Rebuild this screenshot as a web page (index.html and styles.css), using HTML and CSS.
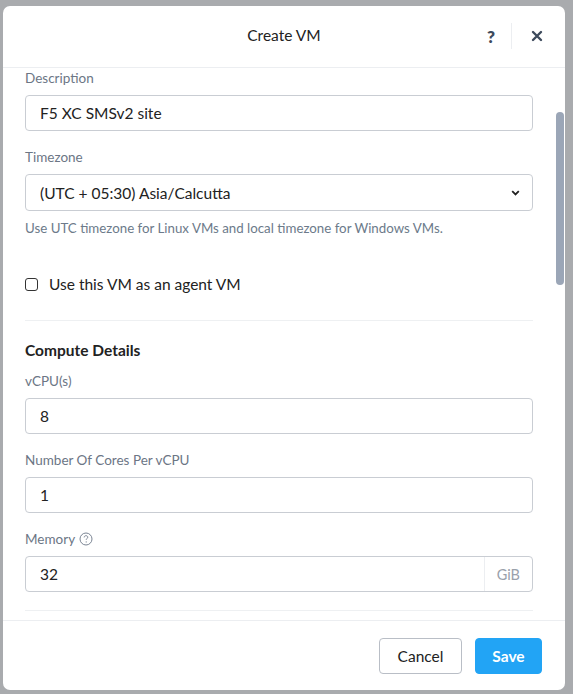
FILE: index.html
```html
<!DOCTYPE html>
<html>
<head>
<meta charset="utf-8">
<link rel="stylesheet" href="styles.css">
</head>
<body>
<div class="backdrop">
  <div class="modal">
    <div class="header">
      <div class="title">Create VM</div>
      <div class="actions">
        <span class="help">?</span>
        <span class="vdiv"></span>
        <svg class="close" width="12" height="12" viewBox="0 0 12 12"><path d="M2 2 L10 10 M10 2 L2 10" stroke="#3d4a5c" stroke-width="2.4" stroke-linecap="round"/></svg>
      </div>
    </div>
    <div class="body">
      <div class="scroll">
        <div class="field">
          <label class="lbl">Description</label>
          <div class="input">F5 XC SMSv2 site</div>
        </div>
        <div class="field">
          <label class="lbl">Timezone</label>
          <div class="input select">
            <span>(UTC + 05:30) Asia/Calcutta</span>
            <svg width="9" height="6" viewBox="0 0 9 6"><path d="M1.2 1.2 L4.5 4.5 L7.8 1.2" fill="none" stroke="#222" stroke-width="1.8"/></svg>
          </div>
          <div class="hint">Use UTC timezone for Linux VMs and local timezone for Windows VMs.</div>
        </div>
        <div class="check-row">
          <span class="box"></span>
          <span>Use this VM as an agent VM</span>
        </div>
        <div class="sep"></div>
        <div class="section">Compute Details</div>
        <div class="field">
          <label class="lbl">vCPU(s)</label>
          <div class="input">8</div>
        </div>
        <div class="field">
          <label class="lbl">Number Of Cores Per vCPU</label>
          <div class="input">1</div>
        </div>
        <div class="field">
          <label class="lbl">Memory
            <svg class="qicon" width="14" height="14" viewBox="0 0 14 14"><circle cx="7" cy="7" r="6" fill="none" stroke="#7b8594" stroke-width="1"/><path d="M5.2 5.4 C5.2 4.3 6 3.7 7 3.7 C8 3.7 8.8 4.3 8.8 5.2 C8.8 6.2 7.2 6.5 7.2 7.8" fill="none" stroke="#7b8594" stroke-width="1"/><circle cx="7.2" cy="9.9" r="0.6" fill="#7b8594"/></svg>
          </label>
          <div class="input suffix">
            <span class="val">32</span>
            <span class="unit">GiB</span>
          </div>
        </div>
        <div class="sep sep-last"></div>
        <div class="more"></div>
      </div>
      <div class="thumb"></div>
    </div>
    <div class="footer">
      <button class="btn cancel">Cancel</button>
      <button class="btn save">Save</button>
    </div>
  </div>
</div>
</body>
</html>
```
FILE: styles.css
```css
* { box-sizing: border-box; }
html, body { margin: 0; padding: 0; }
body {
  width: 573px;
  height: 694px;
  overflow: hidden;
  background: #a9abae;
  font-family: "Lato", "Open Sans", sans-serif;
  color: #222;
}
.backdrop {
  width: 573px;
  height: 694px;
  padding: 6px 8px 4px 3px;
}
.modal {
  width: 562px;
  height: 684px;
  background: #fff;
  border-radius: 7px;
  display: flex;
  flex-direction: column;
  overflow: hidden;
}
.header {
  height: 62px;
  flex: none;
  border-bottom: 1px solid #eceef1;
  display: flex;
  align-items: center;
  justify-content: center;
  position: relative;
}
.title {
  font-size: 15.5px;
  color: #222;
  margin-top: -3px;
}
.actions {
  position: absolute;
  right: 22px;
  top: 17px;
  display: flex;
  align-items: center;
  height: 26px;
}
.help {
  font-weight: 800;
  font-size: 17px;
  color: #3d4a5c;
  width: 16px;
  text-align: center;
}
.vdiv {
  width: 1px;
  height: 26px;
  background: #eceef1;
  margin: 0 19px 0 12px;
}
.close { display: block; }
.body {
  flex: 1;
  position: relative;
  overflow: hidden;
}
.scroll {
  padding: 2px 32px 0 22px;
}
.field { margin-bottom: 18px; }
.lbl {
  display: flex;
  align-items: center;
  gap: 4px;
  font-size: 13.5px;
  line-height: 16px;
  color: #6c7685;
  margin-bottom: 9px;
}
.qicon { display: block; }
.input {
  height: 36px;
  border: 1px solid #c9cdd3;
  border-radius: 4px;
  padding: 0 14px;
  display: flex;
  align-items: center;
  font-size: 15.5px;
  color: #222;
}
.select {
  height: 37px;
  justify-content: space-between;
  padding-right: 12px;
}
.hint {
  font-size: 13.3px;
  color: #6c7a8a;
  margin-top: 9px;
}
.check-row {
  display: flex;
  align-items: center;
  gap: 11px;
  font-size: 15.5px;
  margin-top: 39px;
}
.box {
  width: 13px;
  height: 13px;
  border: 1.5px solid #333;
  border-radius: 3px;
}
.sep {
  height: 1px;
  background: #eef0f2;
  margin: 27px 0 20px;
}
.section {
  font-size: 15.5px;
  font-weight: 700;
  color: #222;
  margin-bottom: 14px;
}
.suffix { padding-right: 0; }
.val { flex: 1; }
.unit {
  height: 100%;
  border-left: 1px solid #eceef1;
  display: flex;
  align-items: center;
  padding: 0 12px;
  color: #9aa1ab;
  font-size: 14.5px;
}
.sep-last { margin: 8px 0 0; }
.more { height: 40px; }
.thumb {
  position: absolute;
  right: 1px;
  top: 44px;
  width: 8px;
  height: 173px;
  background: #9ba6b7;
  border-radius: 4px;
}
.footer {
  flex: none;
  height: 70px;
  border-top: 1px solid #eceef1;
  display: flex;
  justify-content: flex-end;
  align-items: center;
  gap: 13px;
  padding: 0 23px 0 0;
}
.btn {
  height: 36px;
  border-radius: 4px;
  font-family: inherit;
  font-size: 15.5px;
  padding: 0 16px;
  cursor: pointer;
}
.cancel {
  background: #fff;
  border: 1px solid #b9bec6;
  color: #222;
  width: 83px;
}
.save {
  background: #22a4f5;
  border: 1px solid #22a4f5;
  color: #fff;
  font-weight: 700;
  width: 67px;
}
```
